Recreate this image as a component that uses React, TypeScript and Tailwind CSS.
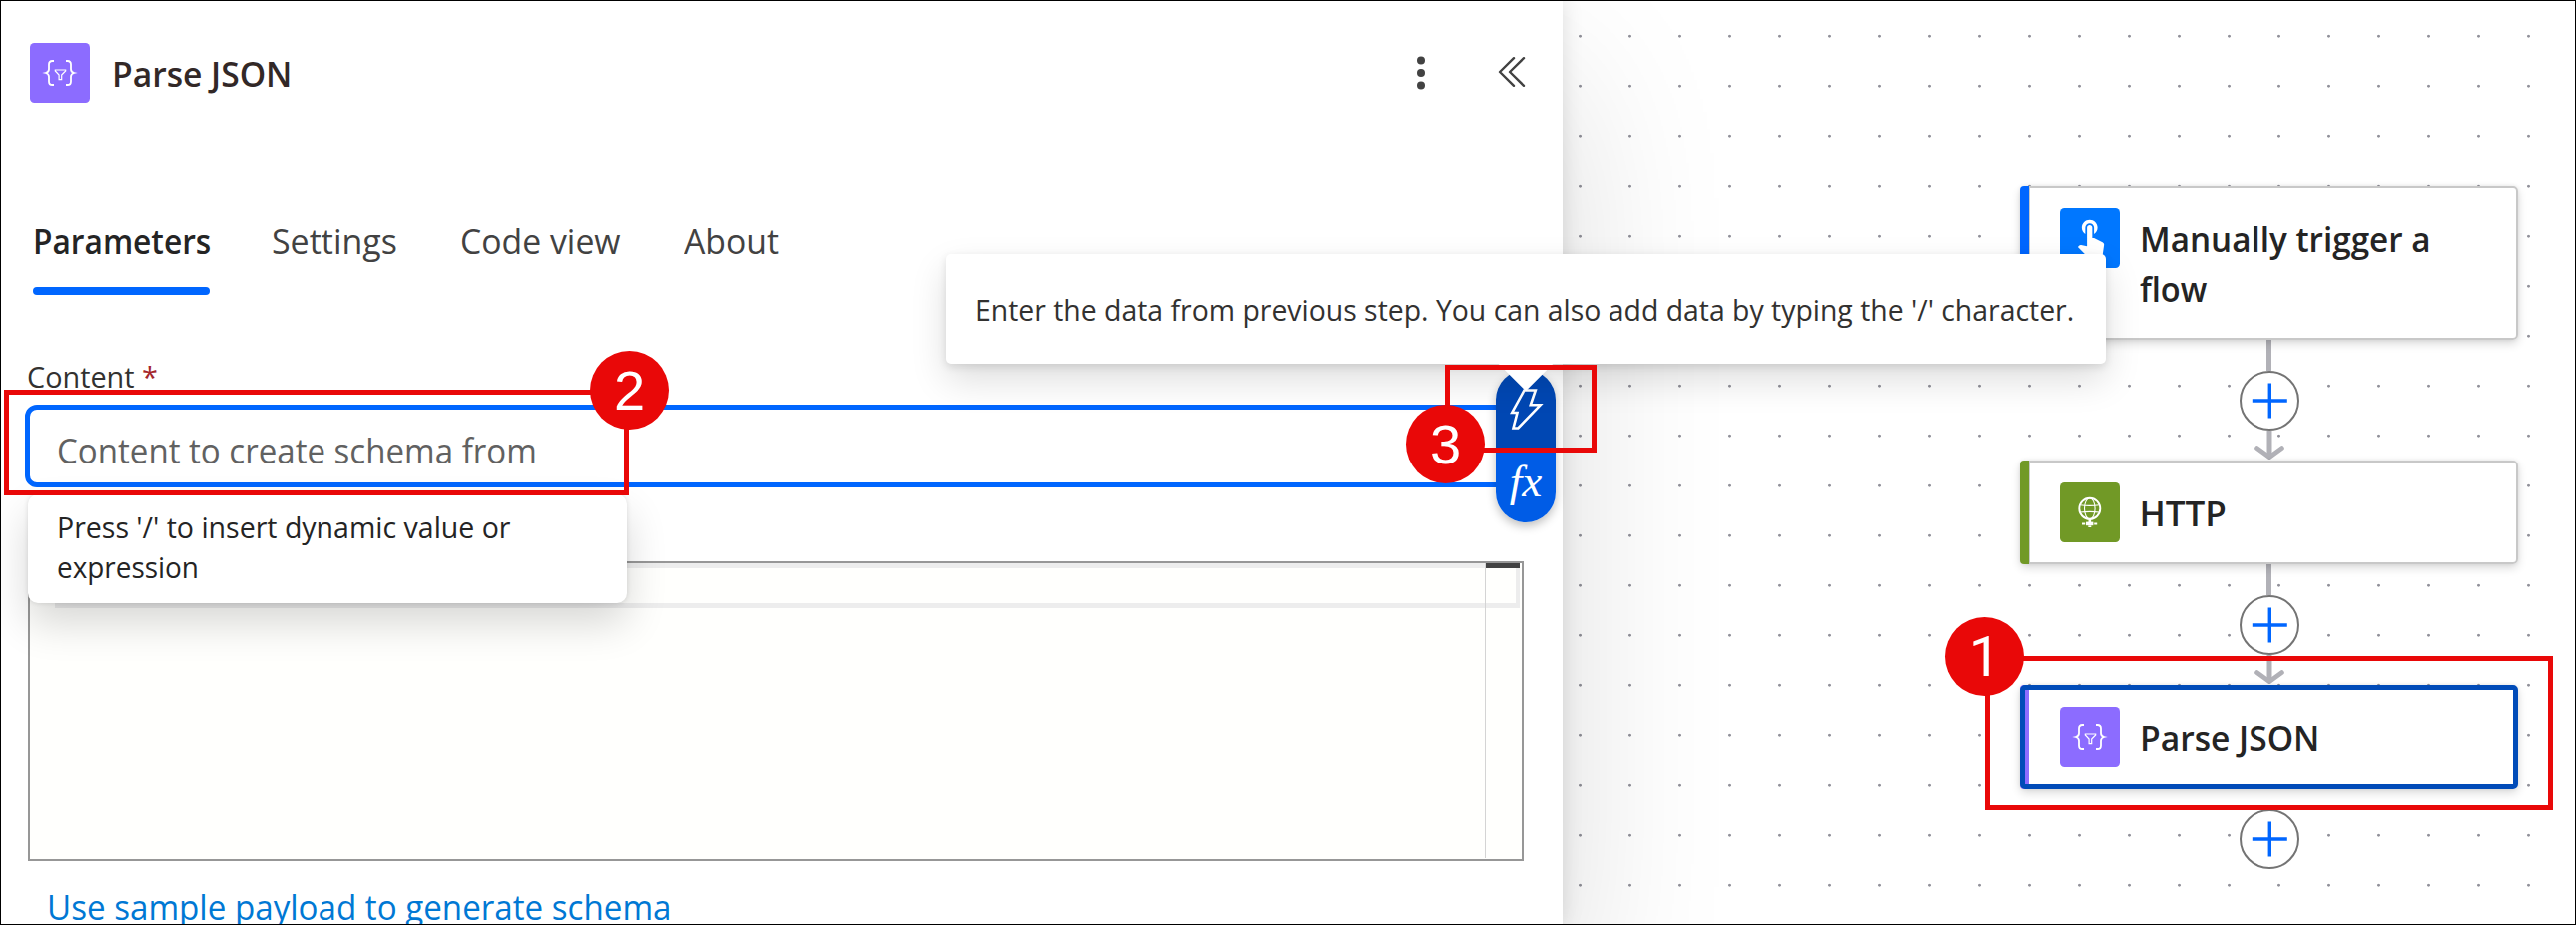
import type { ReactNode } from "react";

const ParseIcon = ({ className = "" }: { className?: string }) => (
  <svg viewBox="0 0 60 60" fill="none" stroke="#fff" className={className}>
    <rect width="60" height="60" rx="4.5" fill="#8c6cff" stroke="none" />
    <path
      d="M24 18h-1.6c-2.300 0-3.400 1.300-3.400 3.600v4.600c0 2-.9 3.200-3.200 3.800 2.300.6 3.200 1.800 3.200 3.800v4.600c0 2.300 1.100 3.600 3.400 3.600H24"
      strokeWidth="1.800"
    />
    <path
      d="M36 18h1.600c2.300 0 3.400 1.300 3.400 3.600v4.600c0 2 .9 3.200 3.200 3.800-2.300.6-3.200 1.800-3.200 3.800v4.600c0 2.300-1.100 3.600-3.400 3.600H36"
      strokeWidth="1.800"
    />
    <path d="M25.300 27h10.400v1l-4 4v4.700h-2.600V32l-3.800-4z" strokeWidth="1.200" />
  </svg>
);

const TouchIcon = ({ className = "" }: { className?: string }) => (
  <svg viewBox="0 0 60 60" className={className}>
    <rect width="60" height="60" rx="4.5" fill="#0077ff" />
    <path
      transform="translate(9.600 6.400) scale(1.750)"
      fill="#fff"
      d="M9 11.240V7.500a2.500 2.500 0 015 0v3.740c1.210-.81 2-2.180 2-3.740C16 5.010 13.990 3 11.500 3S7 5.010 7 7.500c0 1.560.79 2.930 2 3.740zm9.840 4.630l-4.540-2.260c-.17-.07-.35-.11-.54-.11H13v-6c0-.83-.67-1.500-1.500-1.500S10 6.670 10 7.500v10.740l-3.430-.72c-.08-.01-.15-.03-.24-.03-.31 0-.59.13-.79.33l-.79.8 4.940 4.940c.27.27.65.44 1.060.44h6.790c.75 0 1.330-.55 1.440-1.280l.75-5.270c.01-.07.02-.14.02-.2 0-.62-.38-1.160-.91-1.380z"
    />
  </svg>
);

const GlobeIcon = ({ className = "" }: { className?: string }) => (
  <svg viewBox="0 0 60 60" fill="none" stroke="#fff" className={className}>
    <rect width="60" height="60" rx="4.5" fill="#719926" stroke="none" />
    <circle cx="29.800" cy="26.300" r="10.500" strokeWidth="1.900" />
    <ellipse cx="29.800" cy="26.300" rx="5.300" ry="10.500" strokeWidth="1.100" />
    <path d="M20 22.800q9.800 1.200 19.600 0M20 30q9.800-1.200 19.600 0" strokeWidth="1.100" />
    <path d="M29.800 37v3" strokeWidth="2.600" />
    <path d="M22 41.500h3.200M34.200 41.500h3" strokeWidth="2.200" />
    <path d="M26 41.400h7.400" strokeWidth="3.600" />
    <path d="M28.300 44.200h3" strokeWidth="1.600" />
  </svg>
);

const Chevrons = () => (
  <svg viewBox="0 0 30 34" className="h-[34px] w-[30px]" fill="none" stroke="#424242" strokeWidth="2.400" strokeLinecap="round" strokeLinejoin="round">
    <path d="M16 2.200 2 16l14 13.800M26 2.200 12 16l14 13.800" />
  </svg>
);

const Dots = () => (
  <svg viewBox="0 0 10 34" className="h-[34px] w-[10px]" fill="#424242">
    <circle cx="5" cy="4.500" r="4" />
    <circle cx="5" cy="17" r="4" />
    <circle cx="5" cy="29.500" r="4" />
  </svg>
);

const AddButton = () => (
  <div className="flex size-[60px] shrink-0 items-center justify-center rounded-full border-2 border-[#747474] bg-white">
    <svg viewBox="0 0 36 36" className="size-9" stroke="#0066ff" strokeWidth="3.400">
      <path d="M18.300 .5v35M.8 18h35" />
    </svg>
  </div>
);

const Connector = () => (
  <div className="flex h-[121px] flex-col items-center">
    <div className="h-[31px] w-[5px] bg-[#b1b1b7]" />
    <AddButton />
    <svg viewBox="0 0 34 30" className="h-[30px] w-[34px]" fill="none" stroke="#b1b1b7">
      <path d="M17 0v26" strokeWidth="5" />
      <path d="M4.600 17.600 17 26.600 29.400 17.600" strokeWidth="4.800" strokeLinecap="round" strokeLinejoin="round" />
    </svg>
  </div>
);

interface NodeProps {
  icon: ReactNode;
  bar: string;
  frame: string;
  children: ReactNode;
}

const FlowNode = ({ icon, bar, frame, children }: NodeProps) => (
  <div className="relative flex w-[499px] rounded-[5px] bg-white pb-[22px] pl-10 pt-[22px] shadow-[0_4px_10px_rgba(0,0,0,0.14),0_0_4px_rgba(0,0,0,0.08)]">
    <div className={`absolute inset-y-0 left-0 w-[9px] rounded-l-[4px] ${bar}`} />
    <div className={`absolute rounded-[5px] ${frame}`} />
    {icon}
    <div className="relative top-px ml-[19.500px] whitespace-nowrap text-[35px] font-semibold text-[#242424]">{children}</div>
  </div>
);

const Badge = ({ n, className }: { n: number; className: string }) => (
  <div className={`absolute flex size-[79px] items-center justify-center rounded-full bg-[#e90808] text-[56px] leading-none text-white ${className}`}>
    <span className="pt-[2px]">{n}</span>
  </div>
);

export default function App() {
  return (
    <div className="relative flex h-[926px] w-[2580px] overflow-hidden bg-white font-['Open_Sans',sans-serif]">
      <section className="relative z-10 flex h-full w-[1565px] shrink-0 flex-col bg-white shadow-[0_0_20px_rgba(0,0,0,0.12),0_80px_160px_rgba(0,0,0,0.14)]">
        <header className="mt-[43px] flex h-[60px] shrink-0 items-center pl-[30px] pr-[35px]">
          <ParseIcon className="size-[60px]" />
          <h1 className="ml-[22px] origin-left scale-x-[0.96] pt-[2px] text-[35px] font-semibold text-[#322827]">Parse JSON</h1>
          <div className="ml-auto flex items-center gap-[72px]">
            <Dots />
            <Chevrons />
          </div>
        </header>

        <nav className="mt-[108px] flex h-[84px] shrink-0 pl-[33px] text-[35px] leading-[60px] text-[#424242]">
          <div className="w-[239px]">
            <div className="w-[177px]">
              <div className="origin-left scale-x-[0.905] font-semibold text-[#242424]">Parameters</div>
              <div className="mt-4 h-2 rounded-full bg-[#0066ff]" />
            </div>
          </div>
          <div className="w-[189px] origin-left scale-x-[0.97]">Settings</div>
          <div className="w-[224px] origin-left scale-x-[0.965]">Code view</div>
          <div className="origin-left scale-x-[0.965]">About</div>
        </nav>

        <label className="ml-[27px] mt-[62px] h-10 shrink-0 text-[30px] leading-10 text-[#323130]">
          <span className="inline-block origin-left scale-x-[0.96]">
            Content <span className="text-[#a4262c]">*</span>
          </span>
        </label>
        <div className="ml-[25px] mt-[8px] flex h-[83px] w-[1505px] shrink-0 items-center rounded-xl border-[5px] border-[#0066ff] bg-white pl-[27px]">
          <span className="origin-left scale-x-[0.945] pt-[9px] text-[35px] text-[#616161]">Content to create schema from</span>
        </div>

        <div className="ml-7 mt-[74px] flex h-[300px] w-[1498px] shrink-0 border-2 border-[#979797] bg-[#fffffd]">
          <div className="relative ml-[25px] h-[45px] w-[1467px] border-b-[5px] border-r-4 border-t-[5px] border-[#ededed]">
            <div className="absolute -top-[5px] right-[30px] h-[295px] w-px bg-[#d4d4d4]" />
            <div className="absolute -right-1 -top-[5px] h-[5px] w-[34px] bg-[#424242]" />
          </div>
        </div>
        <a className="ml-[46.500px] mt-[21px] block shrink-0 origin-left whitespace-nowrap text-[35px] leading-[50px] text-[#0078d4]">
          <span className="inline-block origin-left scale-x-[0.947]">Use sample payload to generate schema</span>
        </a>

        <div className="absolute left-[28px] top-[495px] h-[109px] w-[600px] rounded-[10px] bg-white pl-[29px] pt-[13px] text-[30px] leading-10 text-[#242424] shadow-[0_0_5px_rgba(0,0,0,0.12),0_20px_40px_rgba(0,0,0,0.16)]">
          <div className="origin-left scale-x-[0.95] whitespace-nowrap">Press '/' to insert dynamic value or</div>
          <div className="origin-left scale-x-[0.93]">expression</div>
        </div>

        <div className="absolute left-[1498px] top-[370px] flex h-[153px] w-[60px] flex-col overflow-hidden rounded-[30px] shadow-[0_4px_10px_rgba(0,0,0,0.25)]">
          <div className="flex h-[78px] bg-[#0047b3]">
            <svg viewBox="0 0 60 78" className="h-[78px] w-[60px]" fill="none" stroke="#fff" strokeWidth="2.600">
              <path d="M28.500 20.500h11.300l-5 14.800h9.800L22.300 58.500h-4.800l4-15.500h-5.300z" />
            </svg>
          </div>
          <div className="flex h-[75px] items-center justify-center bg-[#005ce6] font-['Liberation_Serif',serif] text-[45px] italic leading-none text-white">
            <span className="pb-[7px]">fx</span>
          </div>
        </div>
      </section>

      <main className="h-full flex-1 bg-[radial-gradient(circle_at_17.500px_36.200px,#91919a_1px,transparent_1.800px)] bg-[length:50px_50px] pl-[458px] pt-[186px]">
        <div className="flex w-[499px] flex-col items-center">
          <FlowNode icon={<TouchIcon className="size-[60px] shrink-0" />} bar="bg-[#0066ff]" frame="inset-y-0 right-0 left-[9px] rounded-l-none border-2 border-l border-[#c8c8c8]">
            <div className="h-[110px] pt-[5px] leading-[50px]">
              <div className="origin-left scale-x-[0.95]">Manually trigger a</div>
              <div className="origin-left scale-x-[0.93]">flow</div>
            </div>
          </FlowNode>
          <Connector />
          <FlowNode icon={<GlobeIcon className="size-[60px] shrink-0" />} bar="bg-[#719926]" frame="inset-y-0 right-0 left-[9px] rounded-l-none border-2 border-l border-[#c8c8c8]">
            <div className="leading-[60px]">HTTP</div>
          </FlowNode>
          <Connector />
          <FlowNode icon={<ParseIcon className="size-[60px] shrink-0" />} bar="bg-[#8c6cff]" frame="inset-0 border-[5px] border-[#004bb8]">
            <div className="origin-left scale-x-[0.96] leading-[60px]">Parse JSON</div>
          </FlowNode>
          <div className="mt-5">
            <AddButton />
          </div>
        </div>
      </main>

      <div className="absolute left-[947px] top-[254px] z-20 h-[110px] w-[1162px] rounded-[5px] bg-white shadow-[0_16px_36px_rgba(0,0,0,0.132),0_3px_9px_rgba(0,0,0,0.108)]">
        <div className="absolute left-[561px] top-[89px] size-10 rotate-45 bg-white" />
        <p className="relative ml-[30px] w-max origin-left scale-x-[0.9465] whitespace-nowrap pt-px text-[30px] leading-[110px] text-[#323130]">
          Enter the data from previous step. You can also add data by typing the '/' character.
        </p>
      </div>

      <div className="absolute left-[4px] top-[390px] z-30 h-[106px] w-[626px] border-[5px] border-[#e90808]" />
      <Badge n={2} className="left-[591px] top-[350.500px] z-30 font-['Liberation_Sans',sans-serif]" />
      <div className="absolute left-[1447px] top-[365px] z-30 h-[88px] w-[152px] border-[5px] border-[#e90808]" />
      <Badge n={3} className="left-[1408px] top-[404.500px] z-30 font-['Liberation_Sans',sans-serif]" />
      <div className="absolute left-[1988px] top-[657px] z-30 h-[154px] w-[569px] border-[5px] border-[#e90808]" />
      <Badge n={1} className="left-[1948px] top-[617.500px] z-30 font-['Roboto',sans-serif]" />

      <div className="pointer-events-none absolute inset-0 z-40 border border-black" />
    </div>
  );
}
